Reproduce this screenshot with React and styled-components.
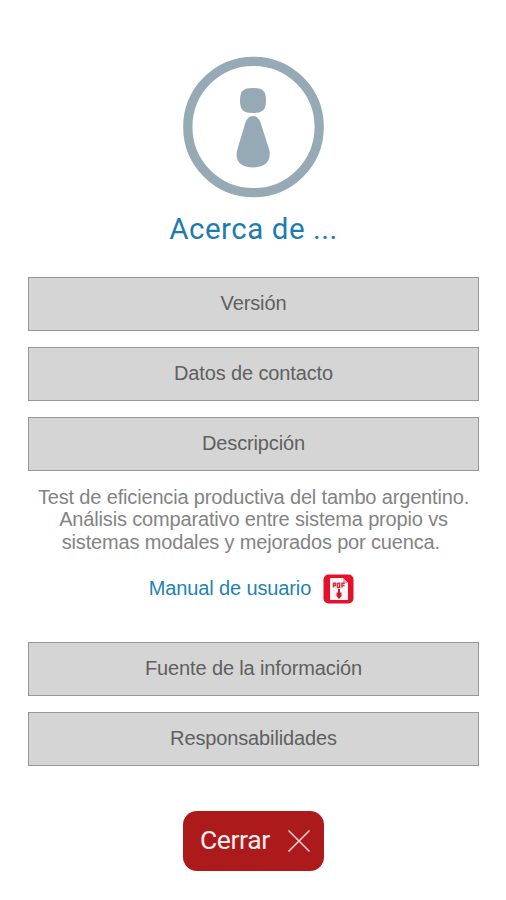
import React from 'react';
import styled, { createGlobalStyle } from 'styled-components';

const GlobalStyle = createGlobalStyle`
  * {
    box-sizing: border-box;
  }

  body {
    margin: 0;
    background-color: #ffffff;
  }
`;

const Page = styled.main`
  height: 900px;
  padding: 56px 27px 0 28px;
  display: flex;
  flex-direction: column;
  align-items: center;
  overflow: hidden;
  background-color: #ffffff;
  font-family: 'Liberation Sans', Arial, sans-serif;
`;

const InfoLogo = styled.svg`
  width: 142px;
  height: 142px;
  flex: none;
`;

const Title = styled.h1`
  margin: 12px 0 28.5px;
  font-family: Roboto, sans-serif;
  font-size: 29.5px;
  font-weight: 400;
  line-height: 38px;
  letter-spacing: 0.53px;
  color: #1c7cb0;
`;

const Sections = styled.div`
  width: 100%;
  display: flex;
  flex-direction: column;
  gap: 16px;
`;

const SectionButton = styled.button`
  width: 100%;
  height: 54.2px;
  padding: 0 0 1px;
  border: 1px solid #989898;
  background-color: #d5d5d5;
  font-family: inherit;
  font-size: 20px;
  letter-spacing: -0.13px;
  color: #606060;
`;

const Description = styled.p`
  margin: 14.5px 0 0;
  font-size: 20px;
  line-height: 22.7px;
  letter-spacing: -0.16px;
  text-align: center;
  white-space: nowrap;
  color: #838383;
`;

const ManualLink = styled.a`
  margin: 19px 0 37px;
  padding-right: 4px;
  display: flex;
  align-items: center;
  gap: 12px;
  font-size: 20px;
  line-height: 30px;
  letter-spacing: -0.13px;
  color: #2183b3;
`;

const ManualLabel = styled.span`
  padding-bottom: 2px;
`;

const PdfIcon = styled.svg`
  width: 31px;
  height: 30px;
`;

const CloseButton = styled.button`
  width: 141px;
  height: 60px;
  flex: none;
  margin-top: 44.6px;
  padding: 0 13px 0 17px;
  display: flex;
  align-items: center;
  justify-content: space-between;
  border: 0;
  border-radius: 14px;
  background-color: #ac1a1c;
  font-family: Roboto, sans-serif;
  font-size: 26.5px;
  letter-spacing: -0.4px;
  line-height: 32px;
  color: #fbeeec;
`;

const CloseLabel = styled.span`
  padding-bottom: 2px;
`;

const CloseIcon = styled.svg`
  width: 24px;
  height: 24px;
`;

function App() {
  return (
    <>
      <GlobalStyle />
      <Page>
        <InfoLogo viewBox="0 0 142 142">
          <circle cx="70.500" cy="71" r="65.7" fill="none" stroke="#96aab5" strokeWidth="9.3" />
          <path
            d="M70 32C80 32 83 35 83 44.5S80 57 70 57S57 54 57 44.5S60 32 70 32Z"
            fill="#96aab5"
          />
          <path
            d="M70 60C74 60 76.500 63 78 68L86 93C89 104 83 111.500 70 111.500S51 104 54.500 93L62 68C63.500 63 66 60 70 60Z"
            fill="#96aab5"
          />
        </InfoLogo>
        <Title>Acerca de ...</Title>

        <Sections>
          <SectionButton>Versión</SectionButton>
          <SectionButton>Datos de contacto</SectionButton>
          <SectionButton>Descripción</SectionButton>
        </Sections>

        <Description>
          Test de eficiencia productiva del tambo argentino.
          <br />
          Análisis comparativo entre sistema propio vs
          <br />
          sistemas modales y mejorados por cuenca.&nbsp;
        </Description>

        <ManualLink>
          <ManualLabel>Manual de usuario</ManualLabel>
          <PdfIcon viewBox="0 0 31 30">
            <rect x="0.500" y="0.500" width="30" height="29" rx="5" fill="#e2122b" />
            <path d="M7 4H20L25 9V26H7Z" fill="#fff5f5" />
            <path d="M20 4V9H25Z" fill="#f4a3ad" />
            <path
              d="M10.500 9V13.500M10 9.300H12.500V11.500H10.500M14.500 9V13.500H16.700V9.300H14.500M19 13.500V9.300H21.800M19 11.500H21.500"
              fill="none"
              stroke="#cf3548"
              strokeWidth="1.500"
            />
            <path d="M15 15H17V18.500H18.500V22L16 25L13.500 22V18.500H15Z" fill="#c91c32" />
          </PdfIcon>
        </ManualLink>

        <Sections>
          <SectionButton>Fuente de la información</SectionButton>
          <SectionButton>Responsabilidades</SectionButton>
        </Sections>

        <CloseButton>
          <CloseLabel>Cerrar</CloseLabel>
          <CloseIcon viewBox="0 0 24 24">
            <path d="M1.500 1.500L22.500 22.500M22.500 1.500L1.500 22.500" stroke="#f5d5d3" strokeWidth="1.600" />
          </CloseIcon>
        </CloseButton>
      </Page>
    </>
  );
}

export default App;
